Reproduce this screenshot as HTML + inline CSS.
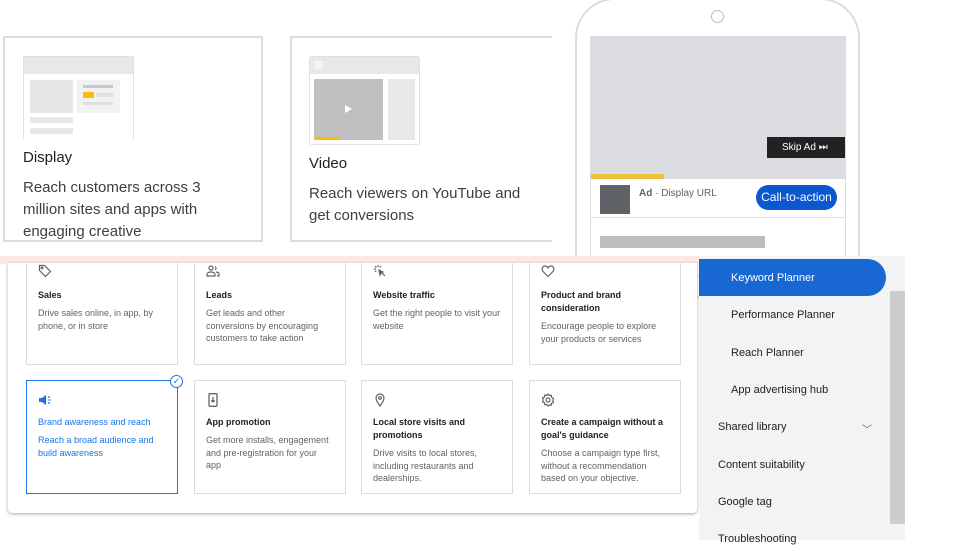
<!DOCTYPE html>
<html><head><meta charset="utf-8"><style>
*{box-sizing:border-box;margin:0;padding:0}
body{width:960px;height:540px;overflow:hidden;background:#fff;font-family:"Liberation Sans",Arial,sans-serif;position:relative;color:#202124}
.a{position:absolute}
.tc{border:2px solid #dadce0;background:#fff}
.tc h3{font-weight:normal;font-size:15px;color:#202124;position:absolute}
.tc p{font-size:15px;line-height:22px;color:#3c4043;position:absolute}
.g{background:#e8e8e8}
.card{position:absolute;border:1px solid #dadce0;background:#fff;width:152px;padding:0 11px}
.card h4{font-size:9px;font-weight:bold;color:#202124;line-height:13px;margin-top:9px}
.card p{font-size:9px;line-height:12.5px;color:#5f6368;margin-top:5px}
.ic{height:14px;margin-top:4px}
.ic svg{display:block}
.sel{border:1.5px solid #1a73e8}
.sel h4,.sel p{color:#1a73e8;font-weight:normal}
.nav{position:absolute;left:718px;font-size:11px;color:#202124}
</style></head><body>
<div class="a tc" style="left:3px;top:36px;width:260px;height:206px">
 <div class="a" style="left:18px;top:18px;width:111px;height:83px;border:1px solid #e0e0e0;border-bottom:none;background:#fff">
  <div class="a g" style="left:0;top:0;width:109px;height:17px"></div>
  <div class="a g" style="left:6px;top:23px;width:43px;height:33px;background:#e6e6e6"></div>
  <div class="a" style="left:53px;top:23px;width:43px;height:33px;background:#f2f2f2"></div>
  <div class="a" style="left:59px;top:28px;width:30px;height:3px;background:#c8c8c8"></div>
  <div class="a" style="left:59px;top:35px;width:11px;height:6px;background:#fbbc04"></div>
  <div class="a" style="left:72px;top:36px;width:17px;height:4px;background:#e0e0e0"></div>
  <div class="a" style="left:59px;top:45px;width:30px;height:3px;background:#e0e0e0"></div>
  <div class="a g" style="left:6px;top:60px;width:43px;height:6px"></div>
  <div class="a g" style="left:6px;top:71px;width:43px;height:6px"></div>
 </div>
 <h3 style="left:18px;top:111px">Display</h3>
 <p style="left:18px;top:139px">Reach customers across 3<br>million sites and apps with<br>engaging creative</p>
</div>
<div class="a tc" style="left:290px;top:36px;width:262px;height:206px;border-right:none">
 <div class="a" style="left:17px;top:18px;width:111px;height:89px;border:1px solid #e0e0e0;border-radius:3px;background:#fff">
  <div class="a g" style="left:0;top:0;width:109px;height:17px"></div>
  <div class="a" style="left:5px;top:4px;width:8px;height:8px;background:#f5f5f5"></div>
  <div class="a" style="left:4px;top:22px;width:69px;height:61px;background:#c0c0c0"></div>
  <div class="a" style="left:35px;top:48px;width:0;height:0;border-left:7px solid #fff;border-top:4px solid transparent;border-bottom:4px solid transparent"></div>
  <div class="a" style="left:4px;top:80px;width:25px;height:3px;background:#fbbc04"></div>
  <div class="a g" style="left:78px;top:22px;width:27px;height:61px"></div>
 </div>
 <h3 style="left:17px;top:117px">Video</h3>
 <p style="left:17px;top:145px">Reach viewers on YouTube and<br>get conversions</p>
</div>
<div class="a" style="left:575px;top:-2px;width:285px;height:300px;border:2px solid #dadce0;border-radius:40px;background:#fff"></div>
<div class="a" style="left:711px;top:10px;width:13px;height:13px;border:1.5px solid #bdbdbd;border-radius:50%"></div>
<div class="a" style="left:590px;top:36px;width:256px;height:240px;border:1px solid #dadce0;background:#fff"></div>
<div class="a" style="left:591px;top:37px;width:254px;height:142px;background:#dcdde0"></div>
<div class="a" style="left:591px;top:174px;width:73px;height:5px;background:#edc23b"></div>
<div class="a" style="left:767px;top:137px;width:78px;height:21px;background:#222;color:#fff;font-size:10px;line-height:21px;padding-left:15px">Skip Ad ⏭</div>
<div class="a" style="left:600px;top:185px;width:30px;height:29px;background:#5f6368"></div>
<div class="a" style="left:639px;top:188px;font-size:10px;color:#5f6368"><b>Ad</b> · Display URL</div>
<div class="a" style="left:756px;top:185px;width:81px;height:25px;border-radius:13px;background:#0b57d0;color:#fff;font-size:12px;line-height:25px;text-align:center">Call-to-action</div>
<div class="a" style="left:591px;top:217px;width:254px;height:1px;background:#e0e0e0"></div>
<div class="a" style="left:600px;top:236px;width:165px;height:12px;background:#bdbdbd"></div>
<div class="a" style="left:0;top:256px;width:700px;height:8px;background:#fce8e6"></div>
<div class="a" style="left:8px;top:263px;width:689px;height:250px;background:#fff;box-shadow:0 1px 3px rgba(0,0,0,.35);border-radius:0 0 4px 4px"></div>
<div class="card" style="left:26px;top:263px;height:102px;border-top:none"><div class="ic" style="margin-top:1px"><svg width="14" height="14" viewBox="0 0 14 14" fill="none" stroke="#5f6368" stroke-width="1.2"><path d="M1.5 1.5h5l6 6-5 5-6-6z"/><circle cx="4" cy="4" r=".8"/></svg></div><h4 style="margin-top:11px">Sales</h4><p>Drive sales online, in app, by phone, or in store</p></div>
<div class="card" style="left:194px;top:263px;height:102px;border-top:none"><div class="ic" style="margin-top:1px"><svg width="14" height="14" viewBox="0 0 14 14" fill="none" stroke="#5f6368" stroke-width="1.2"><circle cx="5" cy="4" r="2"/><path d="M1 12v-2c0-1 2-2 4-2s4 1 4 2v2z"/><path d="M9 2.5a2 2 0 010 3.5M10 8c2 .3 3 1 3 2v2h-2"/></svg></div><h4 style="margin-top:11px">Leads</h4><p>Get leads and other conversions by encouraging customers to take action</p></div>
<div class="card" style="left:361px;top:263px;height:102px;border-top:none"><div class="ic" style="margin-top:1px"><svg width="14" height="14" viewBox="0 0 14 14" fill="none" stroke="#5f6368" stroke-width="1.2"><path d="M6 6l6 6M6 6l1 5 1-2 2-1z" fill="#5f6368"/><path d="M5 1v2M1 5h2M2 2l1.5 1.5M8 2L6.7 3.3M2 8l1.3-1.3"/></svg></div><h4 style="margin-top:11px">Website traffic</h4><p>Get the right people to visit your website</p></div>
<div class="card" style="left:529px;top:263px;height:102px;border-top:none"><div class="ic" style="margin-top:1px"><svg width="14" height="14" viewBox="0 0 14 14" fill="none" stroke="#5f6368" stroke-width="1.2"><path d="M7 12.5L2 7.5C0 5 2 1.5 4.5 2 6 2.3 7 4 7 4s1-1.7 2.5-2C12 1.5 14 5 12 7.5z"/></svg></div><h4 style="margin-top:11px">Product and brand consideration</h4><p>Encourage people to explore your products or services</p></div>
<div class="card sel" style="left:26px;top:380px;height:114px"><div class="ic" style="margin-top:12px"><svg width="14" height="14" viewBox="0 0 14 14"><path d="M1 5h3l4-3v10L4 9H1z" fill="#1a73e8"/><path d="M10 4.5l2-1M10.5 7h2M10 9.5l2 1" stroke="#1a73e8" stroke-width="1.2"/></svg></div><h4>Brand awareness and reach</h4><p>Reach a broad audience and build awareness</p></div>
<div class="a" style="left:170px;top:375px;width:13px;height:13px;border-radius:50%;border:1.5px solid #1a73e8;background:#fff;color:#1a73e8;font-size:9px;line-height:10px;text-align:center">✓</div>
<div class="card" style="left:194px;top:380px;height:114px"><div class="ic" style="margin-top:12px"><svg width="14" height="14" viewBox="0 0 14 14" fill="none" stroke="#5f6368" stroke-width="1.3"><rect x="3" y="0.7" width="8" height="12.6" rx="1"/><path d="M7 4v5M5.3 7.3L7 9l1.7-1.7"/></svg></div><h4>App promotion</h4><p>Get more installs, engagement and pre-registration for your app</p></div>
<div class="card" style="left:361px;top:380px;height:114px"><div class="ic" style="margin-top:12px"><svg width="14" height="14" viewBox="0 0 14 14" fill="none" stroke="#5f6368" stroke-width="1.2"><path d="M7 13C4 9 3 7 3 5a4 4 0 018 0c0 2-1 4-4 8z"/><circle cx="7" cy="5" r="1.3"/></svg></div><h4>Local store visits and promotions</h4><p>Drive visits to local stores, including restaurants and dealerships.</p></div>
<div class="card" style="left:529px;top:380px;height:114px"><div class="ic" style="margin-top:12px"><svg width="14" height="14" viewBox="0 0 14 14" fill="none" stroke="#5f6368" stroke-width="1.2"><circle cx="7" cy="7" r="2"/><path d="M7 1l1.2 1.6 2-.3.3 2L12.5 5.5 11.8 7.5l.7 2-2 .8-.3 2-2-.3L7 13l-1.2-1.6-2 .3-.3-2-2-.8.7-2-.7-2 2-.8.3-2 2 .3z"/></svg></div><h4>Create a campaign without a goal's guidance</h4><p>Choose a campaign type first, without a recommendation based on your objective.</p></div>
<div class="a" style="left:699px;top:256px;width:206px;height:284px;background:#f1f3f4"></div>
<div class="a" style="left:890px;top:291px;width:15px;height:233px;background:#cdcdcd"></div>
<div class="a" style="left:699px;top:259px;width:187px;height:37px;background:#1967d2;border-radius:0 19px 19px 0"></div>
<div class="nav" style="left:731px;top:272px;color:#fff">Keyword Planner</div>
<div class="nav" style="left:731px;top:309px">Performance Planner</div>
<div class="nav" style="left:731px;top:347px">Reach Planner</div>
<div class="nav" style="top:384px;left:731px">App advertising hub</div>
<div class="nav" style="top:421px">Shared library</div>
<div class="nav" style="top:421px;left:862px;font-size:10px;color:#5f6368">﹀</div>
<div class="nav" style="top:459px">Content suitability</div>
<div class="nav" style="top:496px">Google tag</div>
<div class="nav" style="top:533px">Troubleshooting</div>
</body></html>
